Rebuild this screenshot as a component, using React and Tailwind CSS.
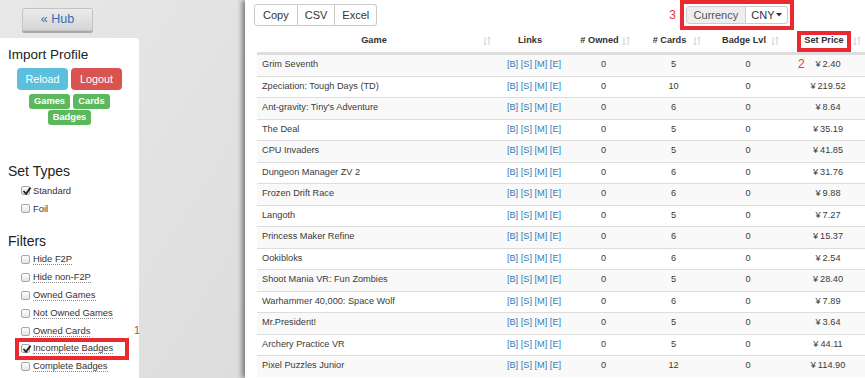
import { useState } from 'react';

const games = [
  { name: 'Grim Seventh', owned: 0, cards: 5, lvl: 0, price: '2.40' },
  { name: 'Zpeciation: Tough Days (TD)', owned: 0, cards: 10, lvl: 0, price: '219.52' },
  { name: "Ant-gravity: Tiny's Adventure", owned: 0, cards: 6, lvl: 0, price: '8.64' },
  { name: 'The Deal', owned: 0, cards: 5, lvl: 0, price: '35.19' },
  { name: 'CPU Invaders', owned: 0, cards: 5, lvl: 0, price: '41.85' },
  { name: 'Dungeon Manager ZV 2', owned: 0, cards: 6, lvl: 0, price: '31.76' },
  { name: 'Frozen Drift Race', owned: 0, cards: 6, lvl: 0, price: '9.88' },
  { name: 'Langoth', owned: 0, cards: 5, lvl: 0, price: '7.27' },
  { name: 'Princess Maker Refine', owned: 0, cards: 6, lvl: 0, price: '15.37' },
  { name: 'Ookibloks', owned: 0, cards: 6, lvl: 0, price: '2.54' },
  { name: 'Shoot Mania VR: Fun Zombies', owned: 0, cards: 5, lvl: 0, price: '28.40' },
  { name: 'Warhammer 40,000: Space Wolf', owned: 0, cards: 6, lvl: 0, price: '7.89' },
  { name: 'Mr.President!', owned: 0, cards: 5, lvl: 0, price: '3.64' },
  { name: 'Archery Practice VR', owned: 0, cards: 5, lvl: 0, price: '44.11' },
  { name: 'Pixel Puzzles Junior', owned: 0, cards: 12, lvl: 0, price: '114.90' },
];

const filters = [
  { label: 'Hide F2P' },
  { label: 'Hide non-F2P' },
  { label: 'Owned Games' },
  { label: 'Not Owned Games' },
  { label: 'Owned Cards', note: true },
  { label: 'Incomplete Badges', checked: true, marked: true },
  { label: 'Complete Badges' },
];

const cols = 'grid grid-cols-[242px_70px_69px_71px_78px_82px]';

const SortIcon = () => (
  <svg width="8" height="10" viewBox="0 0 8 10" fill="none" stroke="#cfcfcf" strokeWidth="1" className="shrink-0">
    <path d="M2 1v8M0.5 7.5L2 9l1.5-1.5M6 9V1M4.5 2.5L6 1l1.5 1.5" />
  </svg>
);

const Checkbox = ({ checked }) => (
  <span className="relative w-[9px] h-[9px] border border-[#a8a8a8] rounded-[2px] bg-linear-to-b from-white to-[#e4e4e4] shrink-0">
    {checked && (
      <svg width="10" height="10" viewBox="0 0 10 10" className="absolute -top-[1px] left-0">
        <path d="M1.5 5L4 7.8L8.6 1.6" fill="none" stroke="#222" strokeWidth="1.8" />
      </svg>
    )}
  </span>
);

const CheckRow = ({ label, checked, marked, note, dotted = true }) => (
  <div className="relative h-[17.8px] flex items-center pl-[21px] gap-[3px]">
    <Checkbox checked={checked} />
    <span className={dotted ? 'leading-[10px] border-b border-dotted border-[#8a8a8a]' : 'leading-[10px]'}>{label}</span>
    {marked && <span className="absolute left-[15px] w-[114px] -top-[2px] -bottom-[2px] border-4 border-[#ea2a30]" />}
    {note && <span className="absolute left-[134px] top-0 text-[11px] text-[#e23b3b]">1</span>}
  </div>
);

const HeadCell = ({ children, sort = true }) => (
  <div className="h-[22px] flex items-center pl-[8px] pr-[8px] font-bold">
    <span className="flex-1 text-center">{children}</span>
    {sort ? <SortIcon /> : <span className="w-[8px]" />}
  </div>
);

const App = () => {
  const [currency] = useState('CNY');

  return (
    <div className="flex w-[865px] h-[378px] overflow-hidden font-['Liberation_Sans',Arial,sans-serif] text-[#333]">
      <aside className="w-[245px] shrink-0 bg-linear-to-br from-[#e8e8e8] to-[#dddddd] flex flex-col">
        <button className="mt-[8px] ml-[22px] w-[71px] h-[23px] rounded-[2px] bg-linear-to-b from-[#ececec] to-[#d6d6d6] border border-[#c4c4c4] shadow-[0_2px_0_#a9a9a9] text-[12.5px] text-[#3170b5]">
          « Hub
        </button>

        <div className="mt-[7px] w-[139px] flex-1 bg-white rounded-tr-[4px] px-[8px] pt-[9px]">
          <h2 className="text-[13.5px] leading-[16px] text-[#222]">Import Profile</h2>
          <div className="mt-[5px] flex justify-center gap-[3px]">
            <button className="w-[51px] h-[22px] rounded-[4px] bg-[#5bc0de] text-white text-[10.8px]">Reload</button>
            <button className="w-[51px] h-[22px] rounded-[4px] bg-[#d9534f] text-white text-[10.8px]">Logout</button>
          </div>
          <div className="mt-[4px] mx-auto w-[82px] flex flex-wrap justify-center gap-x-[3px] gap-y-[1px] text-[9.3px] font-bold text-white">
            <span className="w-[41px] h-[15px] flex items-center justify-center rounded-[3px] bg-[#5cb85c]">Games</span>
            <span className="w-[37px] h-[15px] flex items-center justify-center rounded-[3px] bg-[#5cb85c]">Cards</span>
            <span className="w-[43px] h-[15px] flex items-center justify-center rounded-[3px] bg-[#5cb85c]">Badges</span>
          </div>

          <h2 className="mt-[38px] text-[14px] leading-[16px] text-[#222]">Set Types</h2>
          <div className="-mx-[8px] mt-[3px] text-[9.4px]">
            <div className="h-[18px]"><CheckRow label="Standard" checked dotted={false} /></div>
            <div className="h-[18px]"><CheckRow label="Foil" dotted={false} /></div>
          </div>

          <h2 className="mt-[15px] text-[14px] leading-[16px] text-[#222]">Filters</h2>
          <div className="-mx-[8px] mt-[2px] text-[9.4px]">
            {filters.map((f) => (
              <CheckRow key={f.label} {...f} />
            ))}
          </div>
        </div>
      </aside>

      <main className="flex-1 bg-white shadow-[-3px_0_5px_rgba(0,0,0,0.45)] overflow-hidden">
        <div className="h-[30px] flex items-center pl-[9px]">
          <div className="flex h-[22px] text-[11px] text-[#333]">
            <button className="px-[8px] border border-[#ccc] rounded-l-[3px] bg-white">Copy</button>
            <button className="px-[7px] border border-l-0 border-[#ccc] bg-white">CSV</button>
            <button className="px-[7px] border border-l-0 border-[#ccc] rounded-r-[3px] bg-white">Excel</button>
          </div>
          <span className="ml-[292px] text-[12px] text-[#e23b3b]">3</span>
          <div className="ml-[4px] border-4 border-[#ea2a30] p-[2px]">
            <div className="flex h-[18px] text-[11px]">
              <span className="w-[60px] flex items-center justify-center bg-[#eeeeee] border border-[#ccc] rounded-l-[3px] text-[#555]">Currency</span>
              <span className="w-[42px] flex items-center justify-center gap-[1px] border border-l-0 border-[#ccc] rounded-r-[3px] text-[#333]">
                {currency}
                <svg width="6" height="4" viewBox="0 0 6 4"><path d="M0 0h6L3 3.5z" fill="#333" /></svg>
              </span>
            </div>
          </div>
        </div>

        <div className="ml-[12px] w-[612px] text-[9.2px] text-[#3a3a3a]">
          <div className={`${cols} border-b-2 border-[#ddd] text-[#333]`}>
            <HeadCell>Game</HeadCell>
            <HeadCell sort={false}>Links</HeadCell>
            <HeadCell># Owned</HeadCell>
            <HeadCell># Cards</HeadCell>
            <HeadCell>Badge Lvl</HeadCell>
            <div className="h-[22px] flex items-center pl-[8px] pr-[8px] font-bold">
              <span className="flex-1 flex justify-center">
                <span className="h-[21px] flex items-center px-[3px] border-4 border-[#ea2a30] bg-white">Set Price</span>
              </span>
              <SortIcon />
            </div>
          </div>

          {games.map((g, i) => (
            <div
              key={g.name}
              className={`${cols} h-[21.5px] items-center border-t border-[#ddd] first:border-t-0 ${i % 2 === 0 ? 'bg-[#f9f9f9]' : 'bg-white'}`}
            >
              <div className="pl-[5px] truncate">{g.name}</div>
              <div className="text-center text-[#337ab7]">
                <a>[B]</a> <a>[S]</a> <a>[M]</a> <a>[E]</a>
              </div>
              <div className="text-center">{g.owned}</div>
              <div className="text-center">{g.cards}</div>
              <div className="text-center">{g.lvl}</div>
              <div className="relative text-center">
                {i === 0 && <span className="absolute left-[11px] -top-[3px] text-[12px] text-[#e23b3b]">2</span>}
                ¥<span className="ml-[2px]">{g.price}</span>
              </div>
            </div>
          ))}
        </div>
      </main>
    </div>
  );
};

export default App;
